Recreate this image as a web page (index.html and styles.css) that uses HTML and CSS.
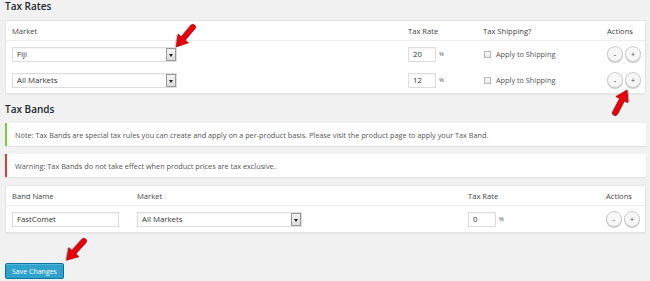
FILE: index.html
```html
<!DOCTYPE html>
<html>
<head>
<meta charset="utf-8">
<link rel="stylesheet" href="styles.css">
</head>
<body>
<div class="page">
  <h2 class="title first">Tax Rates</h2>
  <div class="panel rates">
    <div class="row head">
      <div>Market</div><div>Tax Rate</div><div>Tax Shipping?</div><div>Actions</div>
    </div>
    <div class="row">
      <div><div class="select wide"><span>Fiji</span><span class="arrow"></span></div></div>
      <div class="rate"><span class="input num">20</span><span class="pct">%</span></div>
      <div class="ship"><span class="check"></span>Apply to Shipping</div>
      <div class="acts"><span class="circ">-</span><span class="circ">+</span></div>
    </div>
    <div class="row">
      <div><div class="select wide"><span>All Markets</span><span class="arrow"></span></div></div>
      <div class="rate"><span class="input num">12</span><span class="pct">%</span></div>
      <div class="ship"><span class="check"></span>Apply to Shipping</div>
      <div class="acts"><span class="circ">-</span><span class="circ">+</span></div>
    </div>
  </div>

  <h2 class="title second">Tax Bands</h2>
  <div class="notice green">Note: Tax Bands are special tax rules you can create and apply on a per-product basis. Please visit the product page to apply your Tax Band.</div>
  <div class="notice red">Warning: Tax Bands do not take effect when product prices are tax exclusive.</div>

  <div class="panel bands">
    <div class="row head">
      <div>Band Name</div><div>Market</div><div>Tax Rate</div><div>Actions</div>
    </div>
    <div class="row">
      <div><span class="input name">FastComet</span></div>
      <div><div class="select mid"><span>All Markets</span><span class="arrow"></span></div></div>
      <div class="rate"><span class="input num">0</span><span class="pct">%</span></div>
      <div class="acts"><span class="circ">-</span><span class="circ">+</span></div>
    </div>
  </div>

  <button class="save">Save Changes</button>

  <svg class="marks" width="650" height="281" viewBox="0 0 650 281">
    <defs>
      <path id="arr" d="M0,-2.6 L15,-2.6 L15,-6.8 L26,0 L15,6.8 L15,2.6 L0,2.6 A2.6 2.6 0 0 1 0,-2.6 Z"/>
    </defs>
    <g transform="translate(193,27) rotate(130)">
      <use href="#arr" transform="translate(1,1.2)" fill="#000" opacity="0.25"/>
      <use href="#arr" fill="#e8000b" stroke="#a00000" stroke-width="0.6"/>
    </g>
    <g transform="translate(615,113) rotate(-62.5)">
      <use href="#arr" transform="translate(1,1.2)" fill="#000" opacity="0.25"/>
      <use href="#arr" fill="#e8000b" stroke="#a00000" stroke-width="0.6"/>
    </g>
    <g transform="translate(84,241) rotate(132)">
      <use href="#arr" transform="translate(1,1.2)" fill="#000" opacity="0.25"/>
      <use href="#arr" fill="#e8000b" stroke="#a00000" stroke-width="0.6"/>
    </g>
  </svg>
</div>
</body>
</html>
```
FILE: styles.css
```css
* { box-sizing: border-box; }
html, body { margin: 0; padding: 0; }
body {
  background: #f1f1f1;
  font-family: "Open Sans", "Liberation Sans", sans-serif;
  font-size: 7.3px;
  color: #555;
  width: 650px;
  height: 281px;
  overflow: hidden;
}
.page {
  position: relative;
  padding: 0 4px 0 5px;
  height: 281px;
}
.title {
  margin: 0;
  font-size: 10px;
  font-weight: 600;
  color: #23282d;
  line-height: 12px;
}
.title.first { padding-top: 0; height: 20px; }
.title.second { margin-top: 7px; height: 22px; padding-top: 2px; }
.panel {
  background: #fff;
  border: 1px solid #e5e5e5;
  box-shadow: 0 1px 1px rgba(0,0,0,0.04);
}
.row {
  display: grid;
  align-items: center;
  padding: 0 6px;
  height: 26px;
}
.rates .row { grid-template-columns: 396px 75px 124px auto; }
.bands .row { grid-template-columns: 125px 331px 138px auto; }
.row.head {
  height: 20px;
  border-bottom: 1px solid #eee;
  color: #444;
  font-size: 7.6px;
}
.bands .row:not(.head) { height: 26px; }
.select {
  display: flex;
  align-items: center;
  height: 15px;
  border: 1px solid #ddd;
  box-shadow: inset 0 1px 2px rgba(0,0,0,0.05);
  background: #fff;
  color: #333;
  font-size: 7.8px;
  padding-left: 4px;
  justify-content: space-between;
}
.select.wide { width: 165px; }
.select.mid { width: 165px; }
.select .arrow {
  width: 10px;
  height: 13px;
  background: linear-gradient(#f4f4f4, #dcdcdc);
  border: 1px solid #999;
  position: relative;
}
.select .arrow::after {
  content: "";
  position: absolute;
  left: 2px;
  top: 5px;
  border-left: 2.5px solid transparent;
  border-right: 2.5px solid transparent;
  border-top: 3px solid #222;
}
.input {
  display: inline-flex;
  align-items: center;
  height: 15px;
  border: 1px solid #ddd;
  box-shadow: inset 0 1px 2px rgba(0,0,0,0.05);
  background: #fff;
  color: #333;
  font-size: 7.8px;
  padding-left: 4px;
}
.input.num { width: 28px; }
.input.name { width: 107px; }
.pct { margin-left: 3px; font-size: 6px; color: #555; }
.rate { display: flex; align-items: center; }
.ship { display: flex; align-items: center; color: #555; }
.check {
  width: 7px;
  height: 7px;
  border: 1px solid #b4b9be;
  background: linear-gradient(#fafafa, #e8e8e8);
  margin: 0 5px 0 1px;
}
.acts { display: flex; gap: 2px; }
.circ {
  width: 16px;
  height: 16px;
  border-radius: 50%;
  border: 1px solid #ccc;
  background: #f7f7f7;
  box-shadow: 0 1px 0 #ccc;
  display: flex;
  align-items: center;
  justify-content: center;
  font-size: 7px;
  font-weight: 600;
  color: #555;
}
.notice {
  background: #fff;
  border-left: 2px solid #7ad03a;
  box-shadow: 0 1px 1px rgba(0,0,0,0.06);
  height: 23px;
  display: flex;
  align-items: center;
  padding-left: 8px;
  color: #555;
  margin-bottom: 8px;
}
.notice.red { border-left-color: #dd3d36; }
.save {
  display: block;
  margin-top: 30px;
  width: 59px;
  height: 16px;
  padding: 0;
  background: #2ea2cc;
  border: 1px solid #0074a2;
  box-shadow: inset 0 1px 0 rgba(120,200,230,0.5);
  color: #fff;
  font-family: "Open Sans", "Liberation Sans", sans-serif;
  font-size: 7px;
  border-radius: 2px;
}
.marks {
  position: absolute;
  left: 0;
  top: 0;
  pointer-events: none;
}
```
